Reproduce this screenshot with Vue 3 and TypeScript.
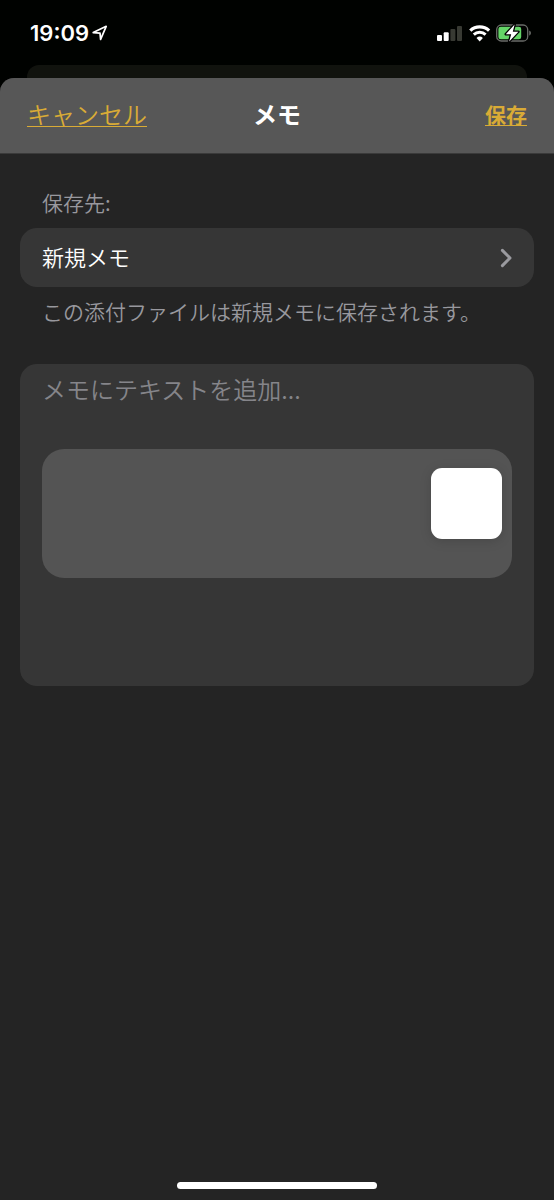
<script setup lang="ts">
import { ref } from 'vue'

const noteText = ref<string>('')
const destination = ref<string>('新規メモ')
</script>

<template>
  <div class="screen">
    <div class="status-bar">
      <div class="clock">
        <time>19:09</time>
        <svg class="location" width="16" height="16" viewBox="0 0 16 16" aria-hidden="true">
          <path d="M1.2 7.6 14.2 1.3 8.6 14.4 8 8.2Z" fill="none" stroke="#fff" stroke-width="1.7" stroke-linejoin="round" />
        </svg>
      </div>
      <div class="indicators">
        <svg width="27" height="17" viewBox="0 0 27 17" aria-label="電波強度" role="img">
          <rect x="0" y="10" width="5" height="6" rx="1" fill="#fff" />
          <rect x="6.7" y="7.3" width="5" height="8.7" rx="1" fill="#fff" />
          <rect x="13.4" y="4" width="5" height="12" rx="1" fill="#383a33" />
          <rect x="20" y="1" width="5" height="15" rx="1" fill="#383a33" />
        </svg>
        <svg width="22" height="17" viewBox="0 0 22 17" aria-label="Wi-Fi" role="img">
          <path d="M1.3 5.7a13.6 13.6 0 0 1 18.8 0" fill="none" stroke="#fff" stroke-width="3.2" />
          <path d="M4.8 9.7a8.6 8.6 0 0 1 11.8 0" fill="none" stroke="#fff" stroke-width="3" />
          <path d="M10.7 16.4 7.5 13Q10.7 10.2 13.9 13Z" fill="#fff" />
        </svg>
        <svg width="35" height="18" viewBox="0 0 35 18" aria-label="充電中" role="img">
          <rect x="0.7" y="1" width="31" height="16" rx="4.6" fill="none" stroke="#6a6c68" stroke-width="1.3" />
          <path d="M33.2 6.4q1.8.9 1.8 2.7t-1.8 2.7z" fill="#6a6c68" />
          <rect x="2.4" y="2.7" width="22.8" height="12.6" rx="2.4" fill="#65d568" />
          <path d="M18.6.6 9.8 10.2h5.4L13.2 17.4 22.4 7.7h-5.6Z" fill="#fff" stroke="#000" stroke-width="2.6" paint-order="stroke" stroke-linejoin="round" />
        </svg>
      </div>
    </div>
    <div class="back-card"></div>
    <main class="sheet">
      <header class="sheet-header">
        <button type="button" class="action cancel">キャンセル</button>
        <h1>メモ</h1>
        <button type="button" class="action save">保存</button>
      </header>
      <div class="content">
        <p id="destination-label" class="caption">保存先:</p>
        <button id="destination" type="button" class="destination" aria-labelledby="destination-label destination">
          <span>{{ destination }}</span>
          <svg width="14" height="20" viewBox="0 0 14 20" aria-hidden="true">
            <path d="m2.4 2.4 7.6 7.6-7.6 7.6" fill="none" stroke="#9a9a9f" stroke-width="3" stroke-linecap="round" stroke-linejoin="round" />
          </svg>
        </button>
        <p class="caption">この添付ファイルは新規メモに保存されます。</p>
        <section class="note">
          <textarea v-model="noteText" rows="1" aria-label="メモ" placeholder="メモにテキストを追加..."></textarea>
          <div class="attachment">
            <div class="thumbnail"></div>
          </div>
        </section>
      </div>
      <div class="home-indicator"></div>
    </main>
  </div>
</template>

<style>
body {
  margin: 0;
  background: #000;
}
</style>

<style scoped>
.screen {
  display: flex;
  flex-direction: column;
  min-height: 100vh;
  background: #000200;
  color: #fff;
  font-family: "Noto Sans CJK JP", sans-serif;
  font-weight: 350;
}

.screen * {
  box-sizing: border-box;
}

.status-bar {
  display: flex;
  justify-content: space-between;
  align-items: center;
  height: 65px;
  padding: 1px 23px 0 30px;
}

.clock,
.indicators {
  display: flex;
  align-items: center;
}

.clock {
  gap: 3px;
  font: 600 22px/24px Inter, sans-serif;
}

.indicators {
  gap: 5px;
}

.back-card {
  height: 13px;
  margin: 0 27px;
  border-radius: 12px 12px 0 0;
  background: #11130e;
}

.sheet {
  display: flex;
  flex: 1;
  flex-direction: column;
  overflow: hidden;
  border-radius: 14px 14px 0 0;
  background: #242424;
}

.sheet-header {
  display: grid;
  grid-template-columns: 1fr auto 1fr;
  align-items: center;
  height: 76px;
  padding: 0 27px 4px;
  border-bottom: 1px solid #3a3a3a;
  background: #575757;
}

h1 {
  margin: 0;
  font-size: 24px;
  line-height: 32px;
  font-weight: 700;
}

button {
  padding: 0;
  border: 0;
  background: none;
  color: inherit;
  font-family: inherit;
  font-weight: inherit;
}

.action {
  color: #d9ab36;
  line-height: 32px;
  text-decoration: underline;
  text-decoration-thickness: 1px;
  text-underline-offset: 2px;
}

.cancel {
  justify-self: start;
  font-size: 24px;
}

.save {
  justify-self: end;
  font-size: 21px;
  font-weight: 700;
}

.content {
  padding: 32px 20px;
}

.caption {
  margin: 0;
  padding: 0 22px;
  color: #98989e;
  font-size: 21px;
  line-height: 32px;
}

.destination {
  display: flex;
  justify-content: space-between;
  align-items: center;
  width: 100%;
  height: 59px;
  margin: 10px 0 8px;
  padding: 0 20px 0 22px;
  border-radius: 17px;
  background: #363636;
  font-size: 22px;
  line-height: 32px;
}

.destination span {
  padding-bottom: 4px;
}

.note {
  min-height: 322px;
  margin-top: 37px;
  padding: 9px 22px;
  border-radius: 17px;
  background: #363636;
}

textarea {
  display: block;
  width: 100%;
  height: 32px;
  padding: 0;
  border: 0;
  outline: 0;
  overflow: hidden;
  resize: none;
  background: none;
  color: #fff;
  font-family: inherit;
  font-size: 24px;
  font-weight: inherit;
  line-height: 32px;
}

textarea::placeholder {
  color: #85858a;
  opacity: 1;
}

.attachment {
  display: flex;
  justify-content: flex-end;
  min-height: 129px;
  margin-top: 44px;
  padding: 19px 10px;
  border-radius: 22px;
  background: #545454;
}

.thumbnail {
  width: 71px;
  height: 71px;
  border-radius: 11px;
  background: #fff;
  box-shadow: 0 2px 12px rgba(0, 0, 0, 0.15);
}

.home-indicator {
  width: 36%;
  height: 7px;
  margin: auto auto 11px;
  border-radius: 4px;
  background: #fff;
}
</style>
